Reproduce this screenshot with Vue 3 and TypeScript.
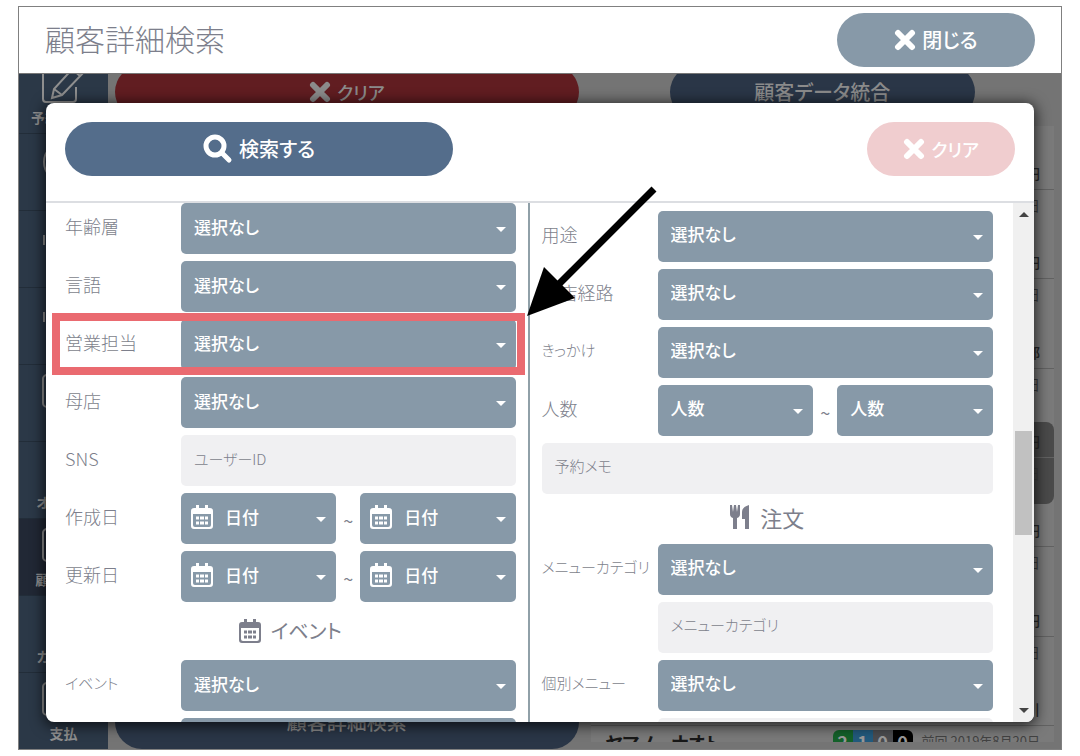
<script setup lang="ts">
interface Field {
  id: string
  label: string
  kind: 'select' | 'text' | 'range' | 'date' | 'heading' | 'memo'
  text: string
  marked?: boolean
}

interface NavItem {
  label: string
  icon: 'edit' | 'circle' | 'dot' | 'box' | 'none'
  active?: boolean
}

const customerFields: Field[] = [
  { id: 'age', label: '年齢層', kind: 'select', text: '選択なし' },
  { id: 'language', label: '言語', kind: 'select', text: '選択なし' },
  { id: 'sales', label: '営業担当', kind: 'select', text: '選択なし', marked: true },
  { id: 'home-shop', label: '母店', kind: 'select', text: '選択なし' },
  { id: 'sns', label: 'SNS', kind: 'text', text: 'ユーザーID' },
  { id: 'created', label: '作成日', kind: 'date', text: '日付' },
  { id: 'updated', label: '更新日', kind: 'date', text: '日付' },
  { id: 'event-heading', label: 'イベント', kind: 'heading', text: '' },
  { id: 'event', label: 'イベント', kind: 'select', text: '選択なし' },
  { id: 'event-date', label: '', kind: 'select', text: '' },
]

const visitFields: Field[] = [
  { id: 'purpose', label: '用途', kind: 'select', text: '選択なし' },
  { id: 'route', label: '来店経路', kind: 'select', text: '選択なし' },
  { id: 'trigger', label: 'きっかけ', kind: 'select', text: '選択なし' },
  { id: 'people', label: '人数', kind: 'range', text: '人数' },
  { id: 'memo', label: '', kind: 'memo', text: '予約メモ' },
  { id: 'order-heading', label: '注文', kind: 'heading', text: '' },
  { id: 'category', label: 'メニューカテゴリ', kind: 'select', text: '選択なし' },
  { id: 'category-name', label: '', kind: 'text', text: 'メニューカテゴリ' },
  { id: 'menu', label: '個別メニュー', kind: 'select', text: '選択なし' },
  { id: 'menu-name', label: '', kind: 'text', text: '' },
]

const panes = [
  { name: 'customer', fields: customerFields },
  { name: 'visit', fields: visitFields },
]

const navItems: NavItem[] = [
  { label: '予約リスト', icon: 'edit' },
  { label: '', icon: 'circle' },
  { label: '', icon: 'dot' },
  { label: '', icon: 'dot' },
  { label: '', icon: 'box' },
  { label: 'オーダー', icon: 'none' },
  { label: '顧客管理', icon: 'box', active: true },
  { label: 'カルテ表', icon: 'none' },
  { label: '支払', icon: 'box' },
]

const visits = [
  { date: '', amount: '円' },
  { date: '日', amount: '円' },
  { date: '日', amount: '部' },
  { date: '日', amount: '円' },
  { date: '日', amount: '円' },
  { date: '日', amount: '円' },
  { date: '日', amount: '引' },
]

const counts = [
  { value: 2, tone: 'green' },
  { value: 1, tone: 'blue' },
  { value: 0, tone: 'gray' },
  { value: 0, tone: 'black' },
]

const hasKana = (text: string): boolean => /[\u3040-\u30ff]/.test(text)
</script>

<template>
  <div class="window">
    <header class="top">
      <h1>顧客詳細検索</h1>
      <button type="button" class="pill close">
        <svg class="cross" viewBox="0 0 22 22"><path d="M4 4 18 18M18 4 4 18" /></svg>閉じる
      </button>
    </header>

    <div class="stage">
      <nav class="side">
        <a v-for="(item, i) in navItems" :key="i" href="#" class="tile" :class="{ active: item.active }">
          <svg class="tile-icon" viewBox="0 0 44 36">
            <path
              v-if="item.icon === 'edit'"
              d="M24 3H4Q1 3 1 6V34Q1 37 4 37H31Q34 37 34 34V22M10 33 12 24 34 0 42 7 20 30ZM12 24 20 30M30 4 38 11"
            />
            <circle v-else-if="item.icon === 'circle'" cx="22" cy="20" r="20" />
            <path v-else-if="item.icon === 'dot'" d="M2 16v10" />
            <rect v-else-if="item.icon === 'box'" x="1" y="2" width="40" height="32" rx="4" />
          </svg>
          <span>{{ item.label }}</span>
        </a>
      </nav>

      <main class="app">
        <section class="detail">
          <button type="button" class="pill red">
            <svg class="cross" viewBox="0 0 22 22"><path d="M4 4 18 18M18 4 4 18" /></svg>クリア
          </button>
          <button type="button" class="pill navy">顧客詳細検索</button>
        </section>
        <section class="results">
          <button type="button" class="pill navy merge">顧客データ統合</button>
          <div class="list">
            <i class="selected"></i>
            <div v-for="(visit, i) in visits" :key="i" class="visit">
              <span>{{ visit.date }}</span>
              <b>{{ visit.amount }}</b>
            </div>
            <div class="guest">
              <b class="name">ヤマノ　ナオト</b>
              <span class="counts">
                <i v-for="(count, i) in counts" :key="i" :class="count.tone">{{ count.value }}</i>
              </span>
              <span class="last">前回 2019年8月20日</span>
            </div>
          </div>
        </section>
      </main>

      <form class="modal" @submit.prevent>
        <div class="actions">
          <button type="submit" class="pill search">
            <svg class="lens" viewBox="0 0 30 30">
              <circle cx="12" cy="12" r="9" />
              <path d="M19 19 26 26" />
            </svg>検索する
          </button>
          <button type="reset" class="pill clear">
            <svg class="cross" viewBox="0 0 22 22"><path d="M4 4 18 18M18 4 4 18" /></svg>クリア
          </button>
        </div>

        <div class="body">
          <div v-for="pane in panes" :key="pane.name" class="pane" :class="pane.name">
            <template v-for="field in pane.fields" :key="field.id">
              <h2 v-if="field.kind === 'heading'" :class="{ kana: hasKana(field.label) }">
                <svg v-if="pane.name === 'customer'" class="calendar" viewBox="0 0 22 24">
                  <path class="solid" d="M3 3H5V0H8V3H14V0H17V3H19Q22 3 22 6V21Q22 24 19 24H3Q0 24 0 21V6Q0 3 3 3ZM2 9V20Q2 22 4 22H18Q20 22 20 20V9Z" />
                  <path class="dots" d="M5 13H17M5 18H17" />
                </svg>
                <svg v-else class="cutlery" viewBox="0 0 20 24">
                  <path d="M0 0H2L3 7 4 0H6L7 7 8 0H10V9Q10 12 7 13V24H3V13Q0 12 0 9ZM19 0V24H15V14H12V7Q12 2 19 0Z" />
                </svg>
                {{ field.label }}
              </h2>
              <div v-else class="row" :class="{ marked: field.marked, wide: field.kind === 'memo' }">
                <label v-if="field.kind !== 'memo'" :for="field.id" :class="{ kana: hasKana(field.label) }">{{ field.label }}</label>
                <div class="control">
                  <input
                    v-if="field.kind === 'text' || field.kind === 'memo'"
                    :id="field.id"
                    type="text"
                    :placeholder="field.text"
                    :aria-label="field.label || field.text"
                  />
                  <span v-else-if="field.kind === 'select'" class="drop">
                    <select :id="field.id" :aria-label="field.label || field.id">
                      <option>{{ field.text }}</option>
                    </select>
                  </span>
                  <template v-else>
                    <template v-for="n in 2" :key="n">
                      <span v-if="n === 2" class="tilde">~</span>
                      <span class="drop" :class="{ dated: field.kind === 'date' }">
                        <svg v-if="field.kind === 'date'" class="calendar" viewBox="0 0 22 24">
                          <path class="solid" d="M3 3H5V0H8V3H14V0H17V3H19Q22 3 22 6V21Q22 24 19 24H3Q0 24 0 21V6Q0 3 3 3ZM2 9V20Q2 22 4 22H18Q20 22 20 20V9Z" />
                          <path class="dots" d="M5 13H17M5 18H17" />
                        </svg>
                        <select :id="n === 1 ? field.id : field.id + '-to'" :aria-label="field.label">
                          <option>{{ field.text }}</option>
                        </select>
                      </span>
                    </template>
                  </template>
                </div>
                <svg v-if="field.marked" class="arrow" viewBox="0 0 134 134">
                  <path d="M128 6 32 102" />
                  <polygon points="1,133 18,84 49,115" />
                </svg>
              </div>
            </template>
          </div>
          <div class="scrollbar">
            <i class="up"></i>
            <div class="track"><i class="thumb"></i></div>
            <i class="down"></i>
          </div>
        </div>
      </form>
    </div>
  </div>
</template>

<style>
body {
  margin: 0;
  background: #fff;
}
</style>

<style scoped>
* {
  box-sizing: border-box;
}

.window {
  display: flex;
  flex-direction: column;
  height: calc(100vh - 12px);
  margin: 6px 18px;
  border: 1px solid #808080;
  overflow: hidden;
  font-family: "Noto Sans CJK JP", sans-serif;
  font-feature-settings: "palt";
  color: #7d7f8c;
}

button,
input,
select {
  font: inherit;
  font-feature-settings: inherit;
  border: 0;
  margin: 0;
}

.top {
  position: relative;
  z-index: 1;
  display: flex;
  align-items: center;
  justify-content: space-between;
  flex: none;
  height: 67px;
  padding: 0 26px;
  background: #fff;
  border-bottom: 1px solid #777;
}

h1 {
  margin: 0;
  padding-bottom: 4px;
  font-size: 30px;
  font-weight: 300;
  line-height: 40px;
}

.pill {
  display: flex;
  align-items: center;
  justify-content: center;
  flex: none;
  gap: 6px;
  height: 54px;
  padding: 0 0 1px;
  border-radius: 27px;
  color: #fff;
  font-size: 20px;
  font-weight: 500;
  line-height: 30px;
}

.cross {
  width: 22px;
  height: 22px;
  fill: none;
  stroke: currentColor;
  stroke-width: 6;
  stroke-linecap: round;
}

.close {
  width: 198px;
  background: #8799a8;
}

.stage {
  position: relative;
  display: flex;
  flex: 1;
  min-height: 0;
  background: #747474;
}

.side {
  display: flex;
  flex-direction: column;
  justify-content: flex-end;
  flex: none;
  width: 89px;
  overflow: hidden;
  background: #2b3847;
}

.tile {
  display: flex;
  flex-direction: column;
  align-items: center;
  flex: none;
  gap: 6px;
  height: 77px;
  padding-top: 8px;
  border-top: 1px solid #222d39;
  color: #8f8f8f;
  font-size: 14px;
  font-weight: 700;
  line-height: 20px;
  text-decoration: none;
  white-space: nowrap;
}

.tile.active {
  background: #212835;
}

.tile-icon {
  flex: none;
  width: 44px;
  height: 36px;
  overflow: visible;
  fill: none;
  stroke: #8f8f8f;
  stroke-width: 2;
}

.app {
  display: grid;
  grid-template-columns: 1fr 1fr;
  gap: 12px;
  flex: 1;
  min-width: 0;
  padding: 0 7px;
  overflow: hidden;
}

.detail,
.results {
  display: flex;
  flex-direction: column;
  min-height: 0;
  margin-top: -9px;
}

.detail {
  justify-content: space-between;
}

.app .pill {
  color: #8b8b8b;
}

.pill.red,
.pill.clear {
  font-size: 18px;
}

.red {
  background: #611d21;
}

.navy {
  background: #2a3647;
}

.merge {
  align-self: center;
  width: 305px;
}

.list {
  position: relative;
  display: grid;
  grid-template-rows: 64px repeat(6, 1fr) 16px;
  flex: 1;
  min-height: 0;
  margin: 7px 0;
  overflow: hidden;
  background: #7a7a7a;
}

.selected {
  position: absolute;
  top: 48%;
  right: 0;
  width: 100%;
  height: 82px;
  border-radius: 8px;
  background: #4a4a4a;
}

.visit {
  position: relative;
  display: flex;
  flex-direction: column;
  align-items: flex-end;
  justify-content: space-between;
  padding: 4px 14px 5px;
  border-bottom: 1px solid #626262;
  color: #3f3f3f;
  font-size: 14px;
  line-height: 22px;
}

.visit b {
  color: #292929;
  font-weight: 500;
}

.guest {
  display: flex;
  align-items: flex-start;
  padding: 4px 14px 0 15px;
  color: #424242;
  font-size: 13px;
  line-height: 22px;
  white-space: nowrap;
}

.name {
  flex: 1;
  color: #181818;
  font-size: 18px;
  line-height: 24px;
}

.counts {
  display: flex;
  margin-right: 9px;
  border-radius: 6px;
  overflow: hidden;
  color: #999;
  font-size: 18px;
  font-style: normal;
  font-weight: 700;
}

.counts i {
  width: 20px;
  font-style: normal;
  text-align: center;
}

.green {
  background: #14612a;
}

.blue {
  background: #225a7d;
}

.gray {
  background: #4b4c50;
}

.black {
  background: #000;
}

.modal {
  position: absolute;
  top: 29px;
  right: 27px;
  bottom: 27px;
  left: 27px;
  display: flex;
  flex-direction: column;
  overflow: hidden;
  border-radius: 8px;
  background: #fff;
  box-shadow: 0 2px 14px 2px rgba(0, 0, 0, 0.7);
}

.actions {
  display: flex;
  align-items: flex-start;
  justify-content: space-between;
  flex: none;
  height: 100px;
  padding: 19px;
  border-bottom: 2px solid #dcdee2;
}

.search {
  width: 388px;
  background: #546d8b;
}

.lens {
  width: 30px;
  height: 30px;
  fill: none;
  stroke: #fff;
  stroke-width: 5;
  stroke-linecap: round;
}

.clear {
  width: 148px;
  background: #f0cdcf;
}

.body {
  display: flex;
  flex: 1;
  min-height: 0;
}

.pane {
  display: flex;
  flex-direction: column;
  gap: 7px;
  flex: 1 1 50%;
  min-width: 0;
}

.pane.customer {
  padding: 0 12px 0 19px;
  border-right: 2px solid #90a0a8;
}

.pane.visit {
  align-items: stretch;
  justify-content: flex-start;
  padding: 8px 20px 0 12px;
  border: 0;
  color: #7d7f8c;
}

.row {
  position: relative;
  display: grid;
  grid-template-columns: 116px 1fr;
  align-items: center;
  flex: none;
  height: 51px;
}

.row.wide {
  grid-template-columns: 1fr;
}

label {
  padding-bottom: 5px;
  font-size: 18px;
  font-weight: 300;
  line-height: 26px;
  white-space: nowrap;
}

label.kana {
  font-size: 15px;
}

.control {
  display: flex;
  height: 51px;
}

.control input {
  width: 100%;
  padding: 0 13px 5px;
  border-radius: 5px;
  background: #f0f0f2;
  color: #7d7f8c;
  font-size: 15px;
  font-weight: 300;
}

.control input::placeholder {
  color: #7d7f8c;
  opacity: 1;
}

.drop {
  position: relative;
  flex: 1;
  min-width: 0;
}

.drop::after {
  content: "";
  position: absolute;
  top: 24px;
  right: 10px;
  border: 5px solid transparent;
  border-top-color: #fff;
  border-bottom: 0;
}

.drop select {
  appearance: none;
  width: 100%;
  height: 51px;
  padding: 0 30px 5px 13px;
  border-radius: 5px;
  background: #8799a8;
  color: #fff;
  font-size: 17px;
  font-weight: 500;
}

.drop.dated select {
  padding-left: 44px;
}

.calendar {
  width: 22px;
  height: 24px;
  fill: #7d7f8c;
}

.calendar .solid {
  fill-rule: evenodd;
}

.calendar .dots {
  fill: none;
  stroke: #7d7f8c;
  stroke-width: 3;
  stroke-dasharray: 3 1 4 1 3 9;
}

.dated .calendar {
  position: absolute;
  top: 12px;
  left: 10px;
  fill: #fff;
}

.dated .calendar .dots {
  stroke: #fff;
}

.tilde {
  flex: none;
  width: 24px;
  padding-top: 14px;
  font-size: 18px;
  line-height: 26px;
  text-align: center;
}

h2 {
  display: flex;
  align-items: center;
  justify-content: center;
  flex: none;
  gap: 10px;
  height: 44px;
  margin: 0;
  font-size: 22px;
  font-weight: 400;
  line-height: 30px;
}

h2.kana {
  font-size: 20px;
}

.pane.visit h2 {
  height: 36px;
  padding-bottom: 4px;
}

.cutlery {
  width: 20px;
  height: 24px;
  fill: #7d7f8c;
}

.marked {
  z-index: 1;
}

.marked::after {
  content: "";
  position: absolute;
  top: -6px;
  right: -9px;
  bottom: -5px;
  left: -13px;
  border: 8px solid #ea6a70;
}

.arrow {
  position: absolute;
  right: -144px;
  bottom: 53px;
  width: 134px;
  height: 134px;
  fill: #000;
}

.arrow path {
  stroke: #000;
  stroke-width: 7;
}

.scrollbar {
  display: flex;
  flex-direction: column;
  align-items: center;
  flex: none;
  width: 21px;
  padding: 9px 0;
  background: #f0f0f0;
}

.up,
.down {
  border: 5px solid transparent;
}

.up {
  border-top: 0;
  border-bottom-color: #444;
}

.down {
  border-bottom: 0;
  border-top-color: #444;
}

.track {
  display: flex;
  flex-direction: column;
  flex: 1;
  padding: 8px 0;
}

.track::before {
  content: "";
  flex: 207;
}

.thumb {
  flex: 105;
  width: 17px;
  background: #c1c1c1;
}

.track::after {
  content: "";
  flex: 166;
}
</style>
